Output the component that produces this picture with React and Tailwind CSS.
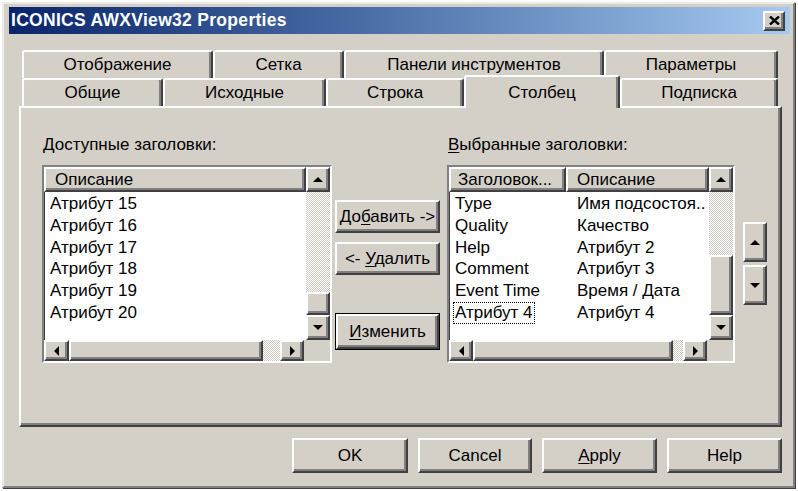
import React from 'react';

// classic 3D bevels
const raised =
  'border-2 border-t-white border-l-white border-r-[#404040] border-b-[#404040] shadow-[inset_-2px_-2px_0_#808080]';
const sunken =
  'border-2 border-t-[#808080] border-l-[#808080] border-r-white border-b-white shadow-[inset_1px_1px_0_#404040]';
const hatch = 'bg-[repeating-conic-gradient(#cfcbc3_0_25%,#ffffff_0_50%)] bg-[length:2px_2px]';

function Arrow({ dir }) {
  const pts = {
    up: '0,5 5,0 10,5',
    down: '0,0 5,5 10,0',
    left: '5,0 0,5 5,10',
    right: '0,0 5,5 0,10',
  }[dir];
  const wide = dir === 'up' || dir === 'down';
  return (
    <svg width={wide ? 10 : 5} height={wide ? 5 : 10} viewBox={wide ? '0 0 10 5' : '0 0 5 10'}>
      <polygon points={pts} fill="#000" />
    </svg>
  );
}

function ScrollBtn({ dir, className = '' }) {
  return (
    <div className={`${raised} bg-[#d4d0c8] flex items-center justify-center shrink-0 ${className}`}>
      <Arrow dir={dir} />
    </div>
  );
}

function Thumb({ className = '' }) {
  return <div className={`${raised} bg-[#d4d0c8] shrink-0 ${className}`} />;
}

function Tab({ label, w, top = false }) {
  return (
    <div
      className={`${w} h-[28px] shrink-0 bg-[#d4d0c8] rounded-t-[3px] border-t-2 border-l-2 border-r-2 border-t-white border-l-white border-r-[#404040] shadow-[inset_-2px_0_0_#808080] flex items-center justify-center ${top ? '' : 'pb-[1px]'}`}
    >
      {label}
    </div>
  );
}

function Button({ children, w = 'w-[105px]', h = 'h-[33px]', def = false }) {
  if (def) {
    return (
      <div className={`${w} ${h} border border-black`}>
        <div className={`${raised} bg-[#d4d0c8] w-full h-full flex items-center justify-center`}>{children}</div>
      </div>
    );
  }
  return <div className={`${raised} bg-[#d4d0c8] ${w} ${h} flex items-center justify-center`}>{children}</div>;
}

const available = ['Атрибут 15', 'Атрибут 16', 'Атрибут 17', 'Атрибут 18', 'Атрибут 19', 'Атрибут 20'];

const selected = [
  ['Type', 'Имя подсостоя..'],
  ['Quality', 'Качество'],
  ['Help', 'Атрибут 2'],
  ['Comment', 'Атрибут 3'],
  ['Event Time', 'Время / Дата'],
  ['Атрибут 4', 'Атрибут 4'],
];

export default function App() {
  return (
    <div className="w-[798px] h-[491px] bg-white pl-[2px] pt-[2px] font-['Liberation_Sans',Arial,sans-serif] text-[17px] text-black overflow-hidden">
      <div className="w-[793px] h-[486px] bg-[#d4d0c8] border-2 border-t-[#ecebe8] border-l-[#ecebe8] border-r-[#808080] border-b-[#808080] shadow-[1px_1px_0_#404040]">
        {/* title bar */}
        <div className="ml-[5px] mt-[3px] w-[781px] h-[27px] bg-gradient-to-r from-[#0a246a] to-[#a6caf0] flex items-center pl-[2px] pr-[5px]">
          <span className="text-white font-bold text-[17.5px] tracking-[0.3px] flex-1">ICONICS AWXView32 Properties</span>
          <div className={`${raised} bg-[#d4d0c8] w-[22px] h-[20px] flex items-center justify-center`}>
            <svg width="11" height="9" viewBox="0 0 11 9">
              <path d="M1 0.5 L10 8.5 M10 0.5 L1 8.5" stroke="#000" strokeWidth="2.4" />
            </svg>
          </div>
        </div>

        {/* tabs + page */}
        <div className="ml-[15px] mt-[16px] w-[763px]">
          <div className="flex pl-[3px]">
            <Tab label="Отображение" w="w-[191px]" top />
            <Tab label="Сетка" w="w-[131px]" top />
            <Tab label="Панели инструментов" w="w-[260px]" top />
            <Tab label="Параметры" w="w-[174px]" top />
          </div>
          <div className="flex items-start pl-[3px]">
            <Tab label="Общие" w="w-[141px]" />
            <Tab label="Исходные" w="w-[163px]" />
            <Tab label="Строка" w="w-[138px]" />
            <div className="relative z-10 w-[156px] h-[33px] -mt-[3px] -mb-[5px] shrink-0 bg-[#d4d0c8] rounded-t-[3px] border-t-2 border-l-2 border-r-2 border-t-white border-l-white border-r-[#404040] shadow-[inset_-2px_0_0_#808080] flex justify-center pt-[3px]">
              Столбец
            </div>
            <Tab label="Подписка" w="w-[158px]" />
          </div>

          <div className="h-[321px] border-2 border-t-white border-l-white border-r-[#404040] border-b-[#404040] shadow-[inset_-2px_-2px_0_#808080] pl-[21px] pt-[27px] flex">
            {/* available headers */}
            <div className="w-[290px] shrink-0">
              <div className="h-[20px] leading-[20px] pl-[1px]">
                <span className="underline underline-offset-2">Д</span>оступные заголовки:
              </div>
              <div className={`${sunken} bg-white mt-[10px] w-[290px] h-[198px] flex flex-col`}>
                <div className="flex h-[173px]">
                  <div className="flex-1 flex flex-col">
                    <div className={`${raised} bg-[#d4d0c8] h-[25px] pl-[9px] flex items-center`}>Описание</div>
                    <div className="pl-[6px] pt-[1px]">
                      {available.map((t) => (
                        <div key={t} className="h-[21.8px] leading-[21.8px]">
                          {t}
                        </div>
                      ))}
                    </div>
                  </div>
                  <div className="w-[24px] flex flex-col">
                    <ScrollBtn dir="up" className="h-[25px]" />
                    <div className={`flex-1 ${hatch}`} />
                    <Thumb className="h-[23px]" />
                    <ScrollBtn dir="down" className="h-[25px]" />
                  </div>
                </div>
                <div className="flex flex-1">
                  <ScrollBtn dir="left" className="w-[25px]" />
                  <Thumb className="w-[194px]" />
                  <div className={`flex-1 ${hatch}`} />
                  <ScrollBtn dir="right" className="w-[24px]" />
                  <div className="w-[26px] bg-[#d4d0c8]" />
                </div>
              </div>
            </div>

            {/* move buttons */}
            <div className="ml-[3px] w-[105px] shrink-0 pt-[65px] flex flex-col">
              <Button>
                <span>
                  До<span className="underline underline-offset-2">б</span>авить -&gt;
                </span>
              </Button>
              <div className="mt-[9px]">
                <Button>
                  <span>
                    &lt;- <span className="underline underline-offset-2">У</span>далить
                  </span>
                </Button>
              </div>
              <div className="mt-[38px]">
                <Button def h="h-[37px]">
                  <span>
                    <span className="underline underline-offset-2">И</span>зменить
                  </span>
                </Button>
              </div>
            </div>

            {/* selected headers */}
            <div className="ml-[7px] w-[288px] shrink-0">
              <div className="h-[20px] leading-[20px] pl-[1px]">
                <span className="underline underline-offset-2">В</span>ыбранные заголовки:
              </div>
              <div className={`${sunken} bg-white mt-[10px] w-[288px] h-[198px] flex flex-col`}>
                <div className="flex h-[173px]">
                  <div className="flex-1 flex flex-col">
                    <div className="flex h-[25px]">
                      <div className={`${raised} bg-[#d4d0c8] w-[117px] pl-[7px] flex items-center`}>Заголовок...</div>
                      <div className={`${raised} bg-[#d4d0c8] flex-1 pl-[9px] flex items-center`}>Описание</div>
                    </div>
                    <div className="pt-[1px]">
                      {selected.map(([a, b], i) => (
                        <div key={a} className="flex h-[21.8px] leading-[19.8px]">
                          {i === selected.length - 1 ? (
                            <div className="w-[117px] pl-[4px]">
                              <span className="border border-dotted border-black px-[1px] inline-block">{a}</span>
                            </div>
                          ) : (
                            <div className="w-[117px] pl-[6px] pt-[1px]">{a}</div>
                          )}
                          <div className="flex-1 pl-[11px] pt-[1px] whitespace-nowrap">{b}</div>
                        </div>
                      ))}
                    </div>
                  </div>
                  <div className="w-[24px] flex flex-col">
                    <ScrollBtn dir="up" className="h-[25px]" />
                    <div className={`h-[63px] ${hatch}`} />
                    <Thumb className="flex-1" />
                    <ScrollBtn dir="down" className="h-[25px]" />
                  </div>
                </div>
                <div className="flex flex-1">
                  <ScrollBtn dir="left" className="w-[24px]" />
                  <Thumb className="w-[200px]" />
                  <div className={`flex-1 ${hatch}`} />
                  <ScrollBtn dir="right" className="w-[24px]" />
                  <div className="w-[26px] bg-[#d4d0c8]" />
                </div>
              </div>
            </div>

            {/* order buttons */}
            <div className="ml-[8px] pt-[87px] flex flex-col gap-[3px]">
              <ScrollBtn dir="up" className="w-[24px] h-[40px]" />
              <ScrollBtn dir="down" className="w-[24px] h-[40px]" />
            </div>
          </div>

          {/* dialog buttons */}
          <div className="mt-[11px] flex justify-end gap-[10px]">
            <Button w="w-[116px]" h="h-[35px]">OK</Button>
            <Button w="w-[114px]" h="h-[35px]">Cancel</Button>
            <Button w="w-[115px]" h="h-[35px]">
              <span>
                <span className="underline underline-offset-2">A</span>pply
              </span>
            </Button>
            <Button w="w-[115px]" h="h-[35px]">Help</Button>
          </div>
        </div>
      </div>
    </div>
  );
}
